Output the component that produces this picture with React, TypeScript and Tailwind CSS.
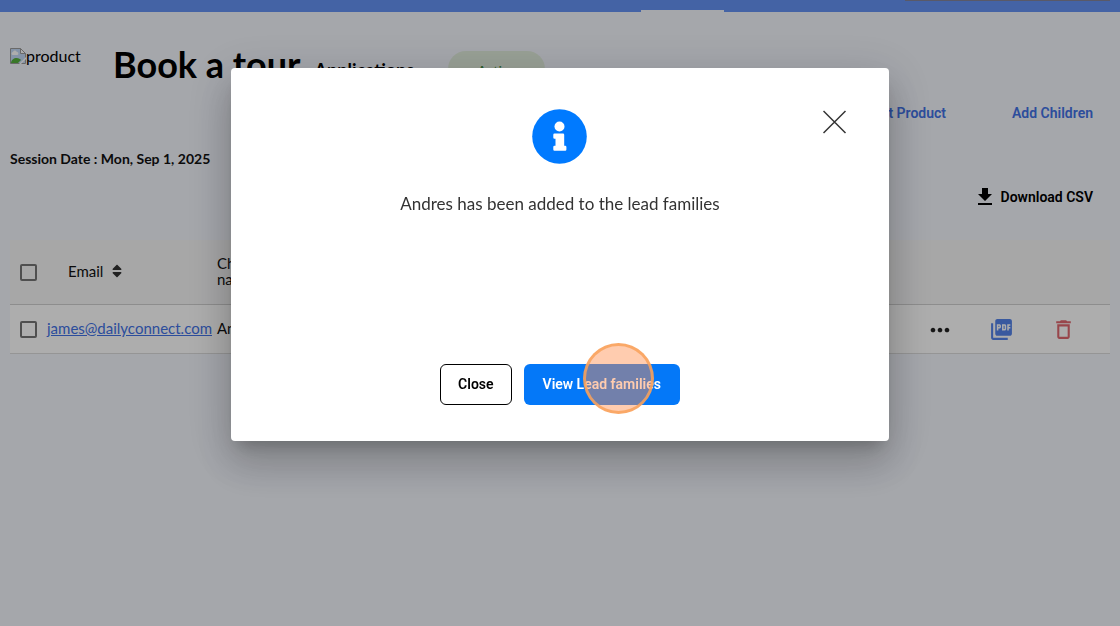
import { MdDownload, MdPictureAsPdf, MdDeleteOutline, MdMoreHoriz } from 'react-icons/md';
import { FaSort } from 'react-icons/fa';

const families = [{ email: 'james@dailyconnect.com', child: 'Andres' }];

function BrokenImageIcon() {
  return (
    <svg viewBox="0 0 16 16" className="w-4 h-4 mt-0.5" aria-hidden="true">
      <path d="M0.5 0.5h10l5 5v10h-15z" fill="#c3d9f7" stroke="#9b9b9b" />
      <path d="M10.5 0.5v5h5z" fill="#fff" stroke="#9b9b9b" />
      <path d="M3 7a1.5 1.5 0 0 1 0-3 2 2 0 0 1 3.8 0A1.5 1.5 0 0 1 7 7z" fill="#fff" />
      <path d="M1 15c0-3 3-5 5.500-5s3.500 1 4.500 2l-3 3z" fill="#55b03c" />
      <path d="M9 16l7-7v2l-5 5z" fill="#fff" />
    </svg>
  );
}

function InfoIcon() {
  return (
    <svg viewBox="0 0 55 55" className="w-[55px] h-[55px]" aria-hidden="true">
      <circle cx="27.5" cy="27.5" r="27.3" fill="#007aff" />
      <circle cx="27.5" cy="17.5" r="5" fill="#fff" />
      <path
        d="M22.500 24.500h8.500a1.200 1.200 0 0 1 1.200 1.200v11h1a1.200 1.200 0 0 1 1.200 1.200v2.700a1.200 1.200 0 0 1-1.200 1.200h-10.700a1.200 1.200 0 0 1-1.200-1.200v-2.700a1.200 1.200 0 0 1 1.200-1.200h1v-7h-1a1.200 1.200 0 0 1-1.200-1.200v-2.800a1.200 1.200 0 0 1 1.200-1.200z"
        fill="#fff"
      />
    </svg>
  );
}

function Checkbox({ label }: { label: string }) {
  return (
    <input
      type="checkbox"
      aria-label={label}
      className="block appearance-none w-[17px] h-[17px] mt-px ml-2.5 border-2 border-[#757575] rounded-[2px]"
    />
  );
}

function TopBar() {
  return (
    <header className="flex justify-between h-3 bg-[#6593f4]">
      <div className="w-[57%]" />
      <div className="flex-1 flex items-end">
        <div className="w-[83px] h-0.5 ml-[3px] bg-[#f3f6fd]" />
      </div>
      <div className="w-[205px] h-px mr-2.5 bg-[#83849a]" />
    </header>
  );
}

function FamiliesTable() {
  return (
    <table className="w-full table-fixed border-collapse text-left text-[15px] leading-4 text-[#111]">
      <colgroup>
        <col className="w-[37px]" />
        <col className="w-[170px]" />
        <col />
        <col className="w-[62px]" />
        <col className="w-[62px]" />
        <col className="w-[77px]" />
      </colgroup>
      <thead>
        <tr className="h-16 bg-[#f6f6f7] border-b border-[#d0d0d0]">
          <th>
            <Checkbox label="Select all" />
          </th>
          <th className="font-normal pl-[21px] pb-0.5">
            <button type="button" className="flex items-center gap-1.5">
              Email
              <FaSort className="w-4 h-4 text-[#333]" />
            </button>
          </th>
          <th className="font-normal pb-0.5">
            Child
            <br />
            name
          </th>
          <th colSpan={3} />
        </tr>
      </thead>
      <tbody>
        {families.map((family) => (
          <tr key={family.email} className="h-[49px] bg-white border-b border-[#dcdcdc]">
            <td>
              <Checkbox label={`Select ${family.email}`} />
            </td>
            <td className="pb-0.5">
              <a href={`mailto:${family.email}`} className="text-[#4272e6] underline">
                {family.email}
              </a>
            </td>
            <td className="pb-0.5">{family.child}</td>
            <td className="pt-0.5">
              <button type="button" aria-label="More" className="block mx-auto text-[#222]">
                <MdMoreHoriz className="w-[28px] h-[28px]" />
              </button>
            </td>
            <td className="pt-0.5">
              <button type="button" aria-label="PDF" className="block ml-[18px] text-[#5584ea]">
                <MdPictureAsPdf className="w-[25px] h-[25px]" />
              </button>
            </td>
            <td className="pt-0.5">
              <button type="button" aria-label="Delete" className="block ml-[18px] text-[#e0686f]">
                <MdDeleteOutline className="w-[25px] h-[25px]" />
              </button>
            </td>
          </tr>
        ))}
      </tbody>
    </table>
  );
}

function LeadDialog() {
  return (
    <div className="fixed inset-0 flex items-start justify-center pt-[68px] bg-black/32">
      <div
        role="dialog"
        aria-modal="true"
        aria-labelledby="lead-message"
        className="w-full max-w-[658px] pt-[41px] pb-9 bg-white rounded-[4px] shadow-[0_11px_15px_-7px_rgba(0,0,0,0.2),0_24px_38px_3px_rgba(0,0,0,0.14),0_9px_46px_8px_rgba(0,0,0,0.12)]"
      >
        <div className="grid grid-cols-3 px-[42px]">
          <div className="col-start-2 justify-self-center">
            <InfoIcon />
          </div>
          <button type="button" aria-label="Dismiss" className="self-start justify-self-end">
            <svg viewBox="0 0 24 24" className="w-6 h-6 mt-px" aria-hidden="true">
              <path d="M0.500 1l22 22M22.500 1L0.500 23" stroke="#333" strokeWidth="1.5" />
            </svg>
          </button>
        </div>
        <p id="lead-message" className="mt-7 text-center text-[17px] leading-6 text-[#333]">
          Andres has been added to the lead families
        </p>
        <div className="flex justify-center gap-3 mt-[148px] font-[Roboto,sans-serif] text-sm font-semibold">
          <button type="button" className="h-[41px] px-[17px] pb-0.5 border border-black rounded-md text-black">
            Close
          </button>
          <button type="button" className="relative h-[41px] px-[19px] pb-0.5 rounded-md bg-[#0478f8] text-white">
            View Lead families
            <span className="absolute -top-[21px] left-[59px] w-[71px] h-[71px] rounded-full border-3 border-[#f9a25c]/85 bg-[#ff8a48]/44" />
          </button>
        </div>
      </div>
    </div>
  );
}

export default function App() {
  return (
    <div className="min-h-screen bg-[#f3f6fd] font-[Lato,sans-serif] text-black">
      <TopBar />
      <main className="px-2.5">
        <div className="flex h-[86px] pt-[34px]">
          <div className="flex w-[103px] text-base leading-5">
            <BrokenImageIcon />
            product
          </div>
          <h1 className="text-4xl leading-9 font-bold">Book a tour</h1>
          <h2 className="ml-3.5 pt-3 text-lg leading-6 font-bold">Applications</h2>
          <span className="h-9 mt-[5px] ml-[34px] px-[29px] pt-2.5 rounded-full bg-[#e1eddd] text-sm leading-5 text-[#3c8a3c]">
            Active
          </span>
        </div>
        <nav className="flex justify-end gap-[66px] h-[50px] pt-[5px] pr-[17px] font-[Roboto,sans-serif] text-sm leading-5 font-semibold text-[#4272e6]">
          <a href="#edit">Edit Product</a>
          <a href="#children">Add Children</a>
        </nav>
        <p className="text-sm leading-[22px] font-bold text-[#111]">Session Date : Mon, Sep 1, 2025</p>
        <div className="flex justify-end pt-[15px] pr-[17px] pb-[31px]">
          <button type="button" className="flex items-center gap-1 font-[Roboto,sans-serif] text-sm font-semibold">
            <MdDownload className="w-6 h-6" />
            Download CSV
          </button>
        </div>
        <FamiliesTable />
      </main>
      <LeadDialog />
    </div>
  );
}
